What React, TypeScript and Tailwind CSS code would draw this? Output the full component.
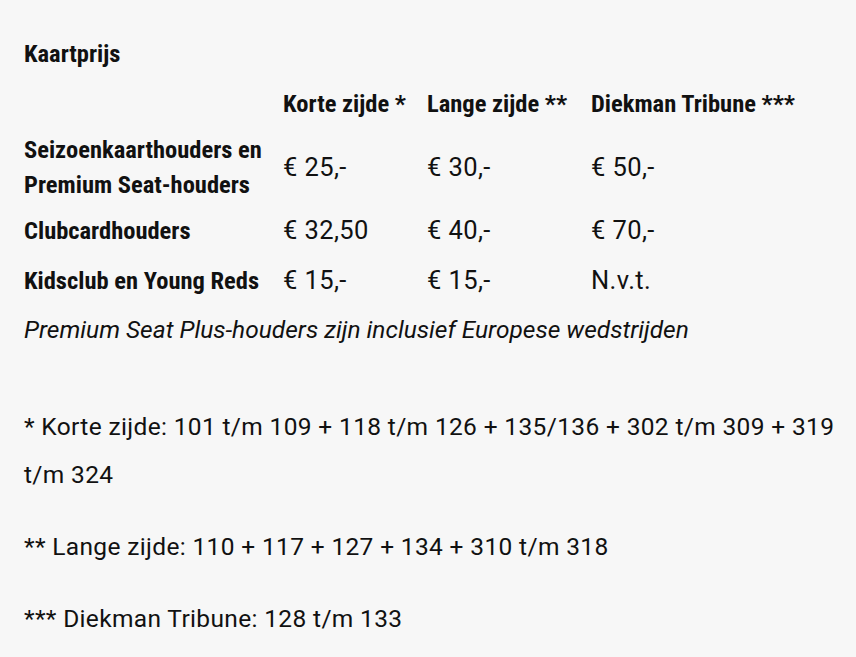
const HEAD = "font-['Roboto_Condensed',sans-serif] font-bold"

const ROWS = [
  { label: 'Seizoenkaarthouders en Premium Seat-houders', prices: ['€ 25,-', '€ 30,-', '€ 50,-'], extra: '' },
  { label: 'Clubcardhouders', prices: ['€ 32,50', '€ 40,-', '€ 70,-'], extra: '' },
  { label: 'Kidsclub en Young Reds', prices: ['€ 15,-', '€ 15,-', 'N.v.t.'], extra: 'pt-[4px]' },
]

export default function App() {
  return (
    <div className="min-h-screen bg-[#f7f7f7] text-[#111] pl-6 pr-3 pt-9 font-['Roboto',sans-serif] text-[24.5px] leading-[35px]">
      <h2 className={`${HEAD} text-[24.5px] leading-[35px]`}>Kaartprijs</h2>

      <div className="mt-[15px] grid grid-cols-[259px_144px_164px_1fr] items-center gap-y-[11px]">
        <div />
        <div className={HEAD}>Korte zijde *</div>
        <div className={HEAD}>Lange zijde **</div>
        <div className={HEAD}>Diekman Tribune ***</div>

        {ROWS.map(row => (
          <div key={row.label} className="contents">
            <div className={`${HEAD} ${row.extra} pr-4 leading-[35px]`}>{row.label}</div>
            {row.prices.map((p, i) => (
              <div key={i} className={`${row.extra} text-[25.5px] tracking-[0.4px]`}>{p}</div>
            ))}
          </div>
        ))}
      </div>

      <p className="mt-[14px] italic">Premium Seat Plus-houders zijn inclusief Europese wedstrijden</p>

      <div className="mt-[56px] leading-[48px] space-y-[24px] tracking-[0.35px]">
        <p>* Korte zijde: 101 t/m 109 + 118 t/m 126 + 135/136 + 302 t/m 309 + 319 t/m 324</p>
        <p>** Lange zijde: 110 + 117 + 127 + 134 + 310 t/m 318</p>
        <p>*** Diekman Tribune: 128 t/m 133</p>
      </div>
    </div>
  )
}
